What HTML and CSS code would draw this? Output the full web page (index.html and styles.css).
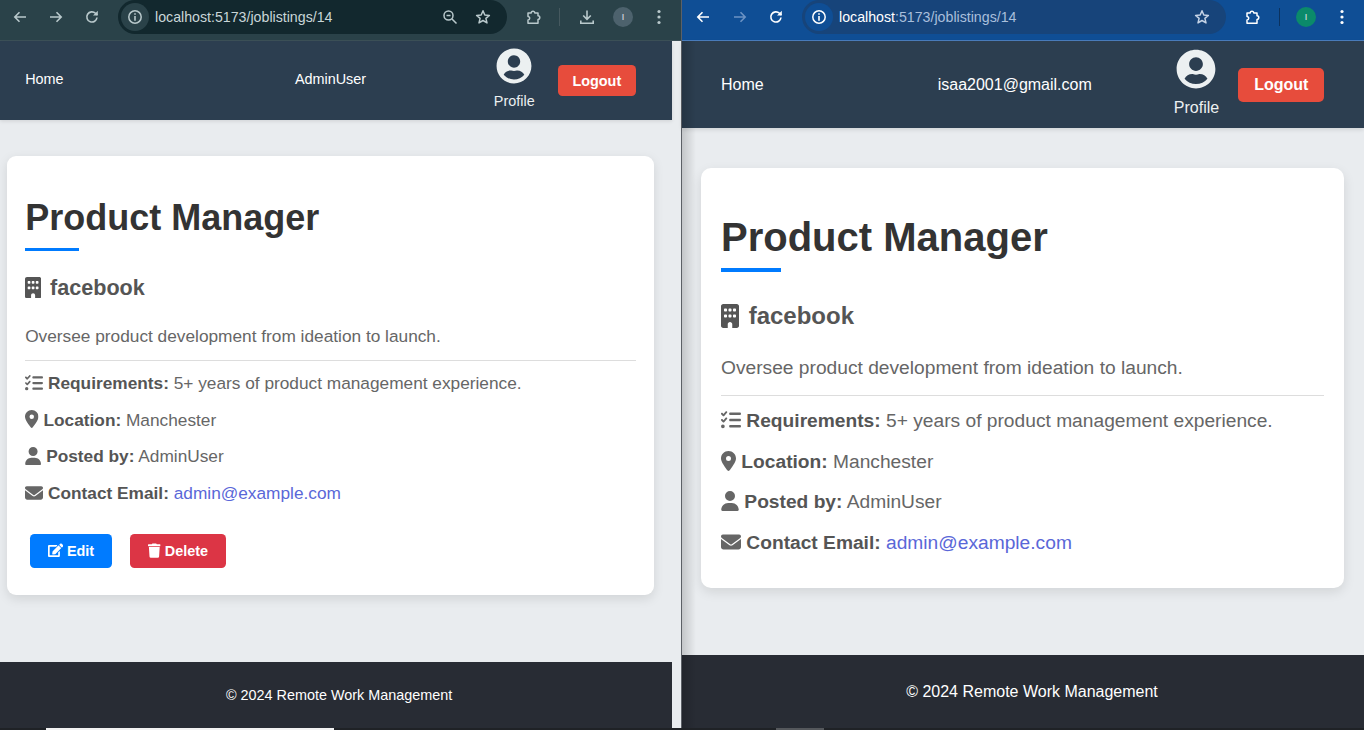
FILE: index.html
```html
<!DOCTYPE html>
<html lang="en">
<head>
    <meta charset="UTF-8">
    <meta name="viewport" content="width=device-width, initial-scale=1.0">
    <title>Job Listing</title>
    <link rel="stylesheet" href="styles.css">
</head>
<body>

<!-- Icon sprite, used by both windows -->
<svg class="sprite" xmlns="http://www.w3.org/2000/svg">
    <symbol id="i-building" viewBox="0 0 384 512"><path d="M48 0C21.5 0 0 21.5 0 48V464c0 26.5 21.5 48 48 48h96V432c0-26.5 21.5-48 48-48s48 21.5 48 48v80h96c26.5 0 48-21.5 48-48V48c0-26.5-21.5-48-48-48H48zM64 240c0-8.8 7.2-16 16-16h32c8.8 0 16 7.2 16 16v32c0 8.8-7.2 16-16 16H80c-8.8 0-16-7.2-16-16V240zm112-16h32c8.8 0 16 7.2 16 16v32c0 8.8-7.2 16-16 16H176c-8.8 0-16-7.2-16-16V240c0-8.8 7.2-16 16-16zm80 16c0-8.8 7.2-16 16-16h32c8.8 0 16 7.2 16 16v32c0 8.8-7.2 16-16 16H272c-8.8 0-16-7.2-16-16V240zM80 96h32c8.8 0 16 7.2 16 16v32c0 8.8-7.2 16-16 16H80c-8.8 0-16-7.2-16-16V112c0-8.8 7.2-16 16-16zm80 16c0-8.8 7.2-16 16-16h32c8.8 0 16 7.2 16 16v32c0 8.8-7.2 16-16 16H176c-8.8 0-16-7.2-16-16V112zM272 96h32c8.8 0 16 7.2 16 16v32c0 8.8-7.2 16-16 16H272c-8.8 0-16-7.2-16-16V112c0-8.8 7.2-16 16-16z"/></symbol>
    <symbol id="i-tasks" viewBox="0 0 512 512"><path d="M152.1 38.2c9.9 8.9 10.7 24 1.8 33.9l-72 80c-4.4 4.9-10.6 7.8-17.2 7.9s-12.9-2.4-17.6-7L7 113C-2.3 103.6-2.3 88.4 7 79s24.6-9.4 33.9 0l22.1 22.1 55.1-61.2c8.9-9.9 24-10.7 33.9-1.8zm0 160c9.9 8.9 10.7 24 1.8 33.9l-72 80c-4.4 4.9-10.6 7.8-17.2 7.9s-12.9-2.4-17.6-7L7 273c-9.4-9.4-9.4-24.6 0-33.9s24.6-9.4 33.9 0l22.1 22.1 55.1-61.2c8.9-9.9 24-10.7 33.9-1.8zM208 96c0-17.7 14.3-32 32-32H480c17.7 0 32 14.3 32 32s-14.3 32-32 32H240c-17.7 0-32-14.3-32-32zm0 160c0-17.7 14.3-32 32-32H480c17.7 0 32 14.3 32 32s-14.3 32-32 32H240c-17.7 0-32-14.3-32-32zm0 160c0-17.7 14.3-32 32-32H480c17.7 0 32 14.3 32 32s-14.3 32-32 32H240c-17.7 0-32-14.3-32-32zM48 368a48 48 0 1 1 0 96 48 48 0 1 1 0-96z"/></symbol>
    <symbol id="i-pin" viewBox="0 0 384 512"><path d="M215.7 499.2C267 435 384 279.4 384 192C384 86 298 0 192 0S0 86 0 192c0 87.4 117 243 168.3 307.2c12.3 15.3 35.1 15.3 47.4 0zM192 128a64 64 0 1 1 0 128 64 64 0 1 1 0-128z"/></symbol>
    <symbol id="i-user" viewBox="0 0 448 512"><path d="M224 256A128 128 0 1 0 224 0a128 128 0 1 0 0 256zm-45.7 48C79.8 304 0 383.8 0 482.3C0 498.7 13.3 512 29.7 512H418.3c16.4 0 29.7-13.3 29.7-29.7C448 383.8 368.2 304 269.7 304H178.3z"/></symbol>
    <symbol id="i-mail" viewBox="0 0 512 512"><path d="M48 64C21.5 64 0 85.5 0 112c0 15.1 7.1 29.3 19.2 38.4L236.8 313.6c11.4 8.5 27 8.5 38.4 0L492.8 150.4c12.1-9.1 19.2-23.3 19.2-38.4c0-26.5-21.5-48-48-48H48zM0 176V384c0 35.3 28.7 64 64 64H448c35.3 0 64-28.7 64-64V176L294.4 339.2c-22.8 17.1-54 17.1-76.8 0L0 176z"/></symbol>
    <symbol id="i-edit" viewBox="0 0 576 512"><path d="M402.6 83.2l90.2 90.2c3.8 3.8 3.8 10 0 13.8L274.4 405.6l-92.8 10.3c-12.4 1.4-22.9-9.1-21.5-21.5l10.3-92.8L388.8 83.2c3.8-3.8 10-3.8 13.8 0zm162-22.9l-48.8-48.8c-15.2-15.2-39.9-15.2-55.2 0l-35.4 35.4c-3.8 3.8-3.8 10 0 13.8l90.2 90.2c3.8 3.8 10 3.8 13.8 0l35.4-35.4c15.2-15.3 15.2-40 0-55.2zM384 346.2V448H64V128h229.8c3.2 0 6.2-1.3 8.5-3.5l40-40c7.6-7.6 2.2-20.5-8.5-20.5H48C21.5 64 0 85.5 0 112v352c0 26.5 21.5 48 48 48h352c26.5 0 48-21.5 48-48V306.2c0-10.7-12.9-16-20.5-8.5l-40 40c-2.2 2.3-3.5 5.3-3.5 8.5z"/></symbol>
    <symbol id="i-trash" viewBox="0 0 448 512"><path d="M432 32H312l-9.4-18.7A24 24 0 0 0 281.1 0H166.8a23.72 23.72 0 0 0-21.4 13.3L136 32H16A16 16 0 0 0 0 48v32a16 16 0 0 0 16 16h416a16 16 0 0 0 16-16V48a16 16 0 0 0-16-16zM53.2 467a48 48 0 0 0 47.9 45h245.8a48 48 0 0 0 47.9-45L416 128H32z"/></symbol>
    <symbol id="i-profile" viewBox="0 0 496 512"><path d="M248 8C111 8 0 119 0 256s111 248 248 248 248-111 248-248S385 8 248 8zm0 96c48.6 0 88 39.4 88 88s-39.4 88-88 88-88-39.4-88-88 39.4-88 88-88zm0 344c-58.7 0-111.3-26.6-146.5-68.2 18.8-35.4 55.6-59.8 98.5-59.8 2.4 0 4.8.4 7.1 1.1 13 4.2 26.6 6.9 40.9 6.9 14.3 0 28-2.7 40.9-6.9 2.3-.7 4.7-1.1 7.1-1.1 42.9 0 79.7 24.4 98.5 59.8C359.3 421.4 306.7 448 248 448z"/></symbol>

    <!-- browser toolbar icons -->
    <symbol id="t-back" viewBox="0 0 16 16"><path d="M14 8H3M7.5 3.2 2.8 8l4.7 4.8" fill="none" stroke="currentColor" stroke-width="1.6"/></symbol>
    <symbol id="t-forward" viewBox="0 0 16 16"><path d="M2 8h11M8.500 3.200 13.200 8l-4.700 4.800" fill="none" stroke="currentColor" stroke-width="1.6"/></symbol>
    <symbol id="t-reload" viewBox="0 0 16 16"><path d="M13 8.500A5.100 5.100 0 1 1 11.500 4.300L13.300 6" fill="none" stroke="currentColor" stroke-width="1.6"/><path d="M13.800 1.800v4.800H9z" fill="currentColor"/></symbol>
    <symbol id="t-info" viewBox="0 0 16 16"><circle cx="8" cy="8" r="6.200" fill="none" stroke="currentColor" stroke-width="1.500"/><path d="M7.200 7h1.600v4.800H7.200zM7.200 4.200h1.600v1.600H7.200z" fill="currentColor"/></symbol>
    <symbol id="t-zoom" viewBox="0 0 16 16"><circle cx="6.500" cy="6.500" r="4.500" fill="none" stroke="currentColor" stroke-width="1.500"/><path d="M4.500 6.500h4M10 10l4.500 4.500" fill="none" stroke="currentColor" stroke-width="1.500"/></symbol>
    <symbol id="t-star" viewBox="0 0 16 16"><path d="M8 1.800 9.800 6l4.600.4-3.500 3 1.100 4.500L8 11.500l-4 2.400 1.100-4.500-3.500-3L6.200 6z" fill="none" stroke="currentColor" stroke-width="1.500" stroke-linejoin="round"/></symbol>
    <symbol id="t-ext" viewBox="0 0 16 16"><path d="M2 4H5.200A1.800 1.800 0 0 1 8.800 4H12V6.800A1.800 1.800 0 0 1 12 10.400V14.200H2V11A1.700 1.700 0 0 0 2 7.600z" fill="none" stroke="currentColor" stroke-width="1.500" stroke-linejoin="round"/></symbol>
    <symbol id="t-download" viewBox="0 0 16 16"><path d="M8 1.500v8.500M4.200 6.500 8 10.300l3.800-3.800M1.800 11.500v2.700h12.400v-2.700" fill="none" stroke="currentColor" stroke-width="1.600"/></symbol>
    <symbol id="t-menu" viewBox="0 0 16 16"><circle cx="8" cy="2.500" r="1.600" fill="currentColor"/><circle cx="8" cy="8" r="1.600" fill="currentColor"/><circle cx="8" cy="13.500" r="1.600" fill="currentColor"/></symbol>
</svg>

<div class="desktop">

    <!-- Left window, admin account at 90% browser zoom -->
    <section class="window window-admin">
        <div class="toolbar">
            <svg class="tool tool-back"><use href="#t-back"/></svg>
            <svg class="tool tool-forward"><use href="#t-forward"/></svg>
            <svg class="tool tool-reload"><use href="#t-reload"/></svg>
            <div class="omnibox">
                <span class="site-info"><svg class="tool-small"><use href="#t-info"/></svg></span>
                <span class="url"><b>localhost</b>:5173/joblistings/14</span>
                <svg class="tool omni-zoom"><use href="#t-zoom"/></svg>
                <svg class="tool omni-star"><use href="#t-star"/></svg>
            </div>
            <svg class="tool tool-ext"><use href="#t-ext"/></svg>
            <span class="tool-sep"></span>
            <svg class="tool tool-download"><use href="#t-download"/></svg>
            <span class="avatar">I</span>
            <svg class="tool tool-menu"><use href="#t-menu"/></svg>
        </div>

        <div class="page">
            <nav class="navbar">
                <a class="nav-link" href="#">Home</a>
                <span class="nav-link nav-user">AdminUser</span>
                <a class="nav-profile" href="#">
                    <svg class="profile-icon"><use href="#i-profile"/></svg>
                    <span>Profile</span>
                </a>
                <button class="logout-btn">Logout</button>
            </nav>

            <main class="content">
                <article class="job-card">
                    <h1 class="job-title">Product Manager</h1>
                    <h3 class="company"><svg class="icon"><use href="#i-building"/></svg> facebook</h3>
                    <p class="description">Oversee product development from ideation to launch.</p>
                    <hr class="rule">
                    <p class="detail"><svg class="icon icon-tasks"><use href="#i-tasks"/></svg> <strong>Requirements:</strong> 5+ years of product management experience.</p>
                    <p class="detail"><svg class="icon icon-pin"><use href="#i-pin"/></svg> <strong>Location:</strong> Manchester</p>
                    <p class="detail"><svg class="icon icon-user"><use href="#i-user"/></svg> <strong>Posted by:</strong> AdminUser</p>
                    <p class="detail"><svg class="icon icon-mail"><use href="#i-mail"/></svg> <strong>Contact Email:</strong> <a class="mail-link" href="#">admin@example.com</a></p>
                    <div class="actions">
                        <button class="btn btn-edit"><svg class="icon icon-edit"><use href="#i-edit"/></svg> Edit</button>
                        <button class="btn btn-delete"><svg class="icon icon-trash"><use href="#i-trash"/></svg> Delete</button>
                    </div>
                </article>
            </main>

            <footer class="footer">© 2024 Remote Work Management</footer>
        </div>
    </section>

    <!-- Right window, normal user at 100% -->
    <section class="window window-user">
        <div class="toolbar">
            <svg class="tool tool-back"><use href="#t-back"/></svg>
            <svg class="tool tool-forward"><use href="#t-forward"/></svg>
            <svg class="tool tool-reload"><use href="#t-reload"/></svg>
            <div class="omnibox">
                <span class="site-info"><svg class="tool-small"><use href="#t-info"/></svg></span>
                <span class="url"><b>localhost</b>:5173/joblistings/14</span>
                <svg class="tool omni-star"><use href="#t-star"/></svg>
            </div>
            <svg class="tool tool-ext"><use href="#t-ext"/></svg>
            <span class="tool-sep"></span>
            <span class="avatar">I</span>
            <svg class="tool tool-menu"><use href="#t-menu"/></svg>
        </div>

        <div class="page">
            <nav class="navbar">
                <a class="nav-link" href="#">Home</a>
                <span class="nav-link nav-user">isaa2001@gmail.com</span>
                <a class="nav-profile" href="#">
                    <svg class="profile-icon"><use href="#i-profile"/></svg>
                    <span>Profile</span>
                </a>
                <button class="logout-btn">Logout</button>
            </nav>

            <main class="content">
                <article class="job-card">
                    <h1 class="job-title">Product Manager</h1>
                    <h3 class="company"><svg class="icon"><use href="#i-building"/></svg> facebook</h3>
                    <p class="description">Oversee product development from ideation to launch.</p>
                    <hr class="rule">
                    <p class="detail"><svg class="icon icon-tasks"><use href="#i-tasks"/></svg> <strong>Requirements:</strong> 5+ years of product management experience.</p>
                    <p class="detail"><svg class="icon icon-pin"><use href="#i-pin"/></svg> <strong>Location:</strong> Manchester</p>
                    <p class="detail"><svg class="icon icon-user"><use href="#i-user"/></svg> <strong>Posted by:</strong> AdminUser</p>
                    <p class="detail"><svg class="icon icon-mail"><use href="#i-mail"/></svg> <strong>Contact Email:</strong> <a class="mail-link" href="#">admin@example.com</a></p>
                </article>
            </main>

            <footer class="footer">© 2024 Remote Work Management</footer>
        </div>
    </section>
</div>

<div class="taskbar">
    <span class="task task-white"></span>
    <span class="task task-grey"></span>
</div>

</body>
</html>
```

FILE: styles.css
```css
* {
    box-sizing: border-box;
}
html, body {
    height: 100%;
}
body {
    margin: 0;
    display: flex;
    flex-direction: column;
    overflow: hidden;
    font-family: "Liberation Sans", Arial, sans-serif;
    background-color: #1f2226;
}
.sprite {
    display: none;
}
.desktop {
    display: flex;
    height: 728px;
}

/* Windows */
.window {
    position: relative;
    display: flex;
    flex-direction: column;
    background-color: #e9ecef;
}
.window-admin {
    width: 682px;
    border-right: 1px solid #5c6066;
}
.window-user {
    width: 682px;
}
.window-user::before {
    content: "";
    position: absolute;
    left: 0;
    top: 41px;
    bottom: 0;
    width: 14px;
    background: linear-gradient(to right, rgba(0, 0, 0, 0.16), rgba(0, 0, 0, 0));
}

/* Browser toolbar */
.toolbar {
    display: flex;
    align-items: center;
    flex: none;
    height: 41px;
    padding-bottom: 7px;
    border-bottom: 1px solid #3c5057;
    background-color: #2a4249;
    color: #b9c9cc;
}
.window-user .toolbar {
    background-color: #0f4e95;
    border-bottom-color: #4a7dbd;
    color: #fff;
}
.tool {
    flex: none;
    width: 16px;
    height: 16px;
}
.tool-small {
    width: 16px;
    height: 16px;
}
.tool-back {
    margin-left: 12px;
}
.tool-forward {
    margin-left: 20px;
}
.tool-reload {
    margin-left: 20px;
}
.window-user .tool-back {
    margin-left: 13px;
}
.window-user .tool-forward {
    margin-left: 21px;
    color: #6c93c4;
}
.omnibox {
    display: flex;
    align-items: center;
    flex: none;
    width: 389px;
    height: 34px;
    margin-left: 18px;
    padding-left: 3px;
    border-radius: 17px;
    background-color: #12282e;
}
.window-user .omnibox {
    width: 424px;
    background-color: #17447a;
}
.site-info {
    display: flex;
    align-items: center;
    justify-content: center;
    flex: none;
    width: 28px;
    height: 28px;
    border-radius: 50%;
    background-color: #2a4249;
}
.window-user .site-info {
    background-color: #0f4e95;
}
.url {
    flex: 1;
    margin-left: 6px;
    font-size: 14.2px;
    color: #c9d6d8;
}
.url b {
    font-weight: normal;
}
.window-user .url {
    color: #a9bfdc;
}
.window-user .url b {
    color: #fff;
}
.omni-zoom {
    margin-right: 17px;
}
.omni-star {
    margin-right: 16px;
}
.window-user .omni-star {
    color: #c5d3e6;
}
.tool-ext {
    margin-left: 19px;
}
.tool-sep {
    flex: none;
    width: 1px;
    height: 18px;
    margin-left: 18px;
    background-color: #46595f;
}
.window-admin .tool-sep {
    margin-left: 17px;
}
.window-user .tool-sep {
    background-color: #0b325f;
}
.tool-download {
    margin-left: 19px;
}
.avatar {
    display: flex;
    align-items: center;
    justify-content: center;
    flex: none;
    width: 20px;
    height: 20px;
    margin-left: 18px;
    border-radius: 50%;
    background-color: #4d626d;
    font-size: 9px;
    color: #e6edef;
}
.window-user .avatar {
    margin-left: 16px;
    background-color: #0b8a6a;
}
.tool-menu {
    margin-left: 18px;
}

/* Page inside the window */
.page {
    display: flex;
    flex-direction: column;
    flex: 1;
}
.window-admin .page {
    zoom: 0.9;
    width: 746.67px;
    flex: none;
    height: 763.3px;
}

/* Navbar */
.navbar {
    display: flex;
    align-items: center;
    flex: none;
    height: 87px;
    padding: 0 40px 0 39px;
    background-color: #2c3e50;
    box-shadow: 0 2px 4px rgba(0, 0, 0, 0.1);
}
.window-admin .navbar {
    height: 88px;
    padding-left: 28px;
}
.nav-link {
    color: #fff;
    font-size: 16px;
    text-decoration: none;
}
.window-admin .nav-link {
    margin-bottom: 4px;
}
.nav-user {
    margin-left: 174px;
}
.window-admin .nav-user {
    margin-left: 257px;
}
.nav-profile {
    display: flex;
    flex-direction: column;
    align-items: center;
    margin-left: 82px;
    padding-bottom: 3px;
    color: #ecf0f1;
    font-size: 16px;
    text-decoration: none;
}
.window-admin .nav-profile {
    margin-left: 142px;
    padding-bottom: 5px;
}
.profile-icon {
    width: 40px;
    height: 40px;
    margin-bottom: 10px;
    fill: #ecf0f1;
}
.logout-btn {
    margin-left: 19px;
    padding: 8px 16px;
    border: none;
    border-radius: 5px;
    background-color: #e74c3c;
    color: white;
    font-family: inherit;
    font-size: 16px;
    font-weight: bold;
}
.window-admin .logout-btn {
    margin-left: 26px;
}

/* Job card */
.content {
    flex: 1;
    padding: 40px 20px 0 19px;
}
.window-admin .content {
    padding-left: 8px;
}
.job-card {
    padding: 20px;
    border-radius: 10px;
    background-color: #fff;
    box-shadow: 0 4px 12px rgba(0, 0, 0, 0.1);
}
.job-title {
    margin: 27px 0 30px;
    font-size: 40px;
    color: #333;
}
.window-admin .job-title {
    margin: 25px 0 26px;
}
.job-title::after {
    content: "";
    display: block;
    width: 60px;
    height: 4px;
    margin-top: 8px;
    background-color: #007bff;
}
.window-admin .job-title::after {
    margin-top: 10px;
}
.company {
    margin: 0 0 27px;
    font-size: 24px;
    color: #555;
}
.window-admin .company {
    margin-bottom: 28px;
}
.description {
    margin: 0 0 16px;
    font-size: 19.2px;
    color: #666;
}
.window-admin .description {
    margin-bottom: 15px;
}
.rule {
    margin: 0 0 14px;
    border: none;
    border-top: 1px solid #ddd;
}
.window-admin .rule {
    margin-bottom: 13px;
}
.detail {
    margin: 0 0 18.5px;
    font-size: 19.2px;
    color: #666;
}
.window-admin .detail {
    margin-bottom: 17.4px;
}
.detail:last-of-type,
.window-admin .detail:last-of-type {
    margin-bottom: 14px;
}
.detail strong {
    color: #555;
}
.mail-link {
    color: #5a67d8;
    text-decoration: none;
}
.icon {
    width: 18px;
    height: 24px;
    margin-right: 3px;
    fill: currentColor;
    vertical-align: -4px;
}
.icon-tasks,
.icon-mail {
    width: 20px;
    height: 20px;
    vertical-align: -3px;
    margin-right: 0;
}
.icon-pin {
    width: 15px;
    height: 20px;
    vertical-align: -3px;
    margin-right: 0;
}
.icon-user {
    width: 18px;
    height: 20px;
    vertical-align: -3px;
    margin-right: 0;
}

/* Edit and delete */
.actions {
    display: flex;
    gap: 20px;
    padding: 19px 0 10px 5px;
}
.btn {
    padding: 10px 20px;
    border: none;
    border-radius: 5px;
    color: white;
    font-family: inherit;
    font-size: 16px;
    font-weight: bold;
}
.btn .icon {
    height: 16px;
    margin-right: 0;
    vertical-align: -2px;
}
.btn .icon-edit {
    width: 17px;
}
.btn .icon-trash {
    width: 14px;
    height: 17px;
    vertical-align: -3px;
}
.btn-edit {
    background-color: #007bff;
}
.btn-delete {
    background-color: #dc3545;
}

/* Footer */
.footer {
    flex: none;
    height: 73px;
    padding: 27px 0 0 7px;
    background-color: #282c34;
    color: #fff;
    font-size: 16px;
    text-align: center;
}
.window-user .footer {
    padding: 28px 0 0 18px;
}

/* Strip of the taskbar at the very bottom */
.taskbar {
    display: flex;
    flex: none;
    height: 2px;
}
.task {
    display: block;
    height: 2px;
}
.task-white {
    width: 288px;
    margin-left: 46px;
    background-color: #f2f2f2;
}
.task-grey {
    width: 48px;
    margin-left: 442px;
    background-color: #55585c;
}
```
